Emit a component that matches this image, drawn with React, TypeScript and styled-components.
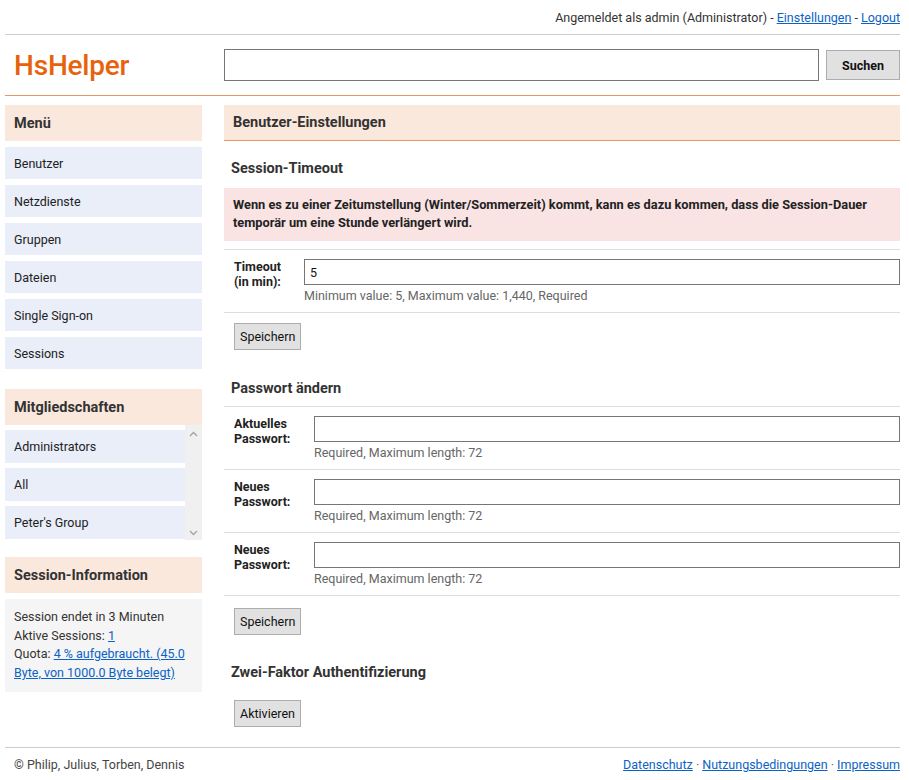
import React from 'react';
import styled, { createGlobalStyle } from 'styled-components';

const GlobalStyle = createGlobalStyle`
  html, body {
    margin: 0;
    padding: 0;
    background: #fff;
  }
  body {
    font-family: Roboto, "Liberation Sans", Arial, sans-serif;
    font-size: 12.5px;
    color: #222;
  }
  a {
    color: #0b63c5;
  }
`;

const Page = styled.div`
  padding: 0 9px 0 5px;
`;

const TopBar = styled.div`
  height: 34px;
  display: flex;
  align-items: center;
  justify-content: flex-end;
  border-bottom: 1px solid #cccccc;
  color: #333;
`;

const Header = styled.header`
  display: grid;
  grid-template-columns: 197px 1fr;
  column-gap: 22px;
  align-items: center;
  height: 60px;
  border-bottom: 1px solid #e59a66;
`;

const Logo = styled.div`
  padding-left: 9px;
  font-size: 28px;
  font-weight: 500;
  color: #e8620c;
  letter-spacing: -0.2px;
`;

const SearchForm = styled.form`
  display: flex;
  align-items: center;
  gap: 7px;
`;

const SearchInput = styled.input`
  flex: 1;
  height: 32px;
  box-sizing: border-box;
  border: 1px solid #767676;
  font: inherit;
`;

const Button = styled.button<{ $bold?: boolean }>`
  height: ${(p) => (p.$bold ? '30px' : '27px')};
  padding: 0 ${(p) => (p.$bold ? '15px' : '5px')};
  background: #e1e1e1;
  border: 1px solid #adadad;
  font-family: Roboto, "Liberation Sans", Arial, sans-serif;
  font-size: 12.5px;
  font-weight: ${(p) => (p.$bold ? 700 : 400)};
  color: #111;
  cursor: pointer;
`;

const Body = styled.div`
  display: grid;
  grid-template-columns: 197px 1fr;
  column-gap: 22px;
  align-items: start;
  padding-top: 9px;
`;

const Sidebar = styled.aside`
  display: flex;
  flex-direction: column;
`;

const Box = styled.section<{ $top?: number }>`
  margin-top: ${(p) => p.$top ?? 0}px;
`;

const BoxTitle = styled.h2<{ $underline?: boolean }>`
  margin: 0;
  height: 36px;
  box-sizing: border-box;
  display: flex;
  align-items: center;
  padding-left: 9px;
  background: #fbe8dd;
  font-size: 14.5px;
  font-weight: 700;
  color: #333;
  border-bottom: ${(p) => (p.$underline ? '1px solid #e59a66' : 'none')};
`;

const MenuList = styled.ul<{ $gap: number }>`
  list-style: none;
  margin: 0;
  padding: 0;
  display: flex;
  flex-direction: column;
  gap: ${(p) => p.$gap}px;
  padding-top: ${(p) => p.$gap}px;
  flex: 1;
`;

const MenuItem = styled.li<{ $height: number }>`
  height: ${(p) => p.$height}px;
  display: flex;
  align-items: center;
  padding-left: 9px;
  background: #e9eef9;
  color: #222;
`;

const ScrollFrame = styled.div`
  display: flex;
  height: 115px;
  overflow: hidden;
`;

const ScrollTrack = styled.div`
  width: 17px;
  background: #f0f0f0;
  display: flex;
  flex-direction: column;
  justify-content: space-between;
  align-items: center;
  padding: 6px 0 4px;
  box-sizing: border-box;
`;

const InfoBox = styled.div`
  margin-top: 6px;
  padding: 9px 9px 9px;
  background: #f5f5f5;
  line-height: 18.7px;
  color: #333;
`;

const Main = styled.main``;

const SectionTitle = styled.h3<{ $top: number; $bottom: number }>`
  margin: ${(p) => p.$top}px 0 ${(p) => p.$bottom}px;
  padding-left: 7px;
  line-height: 20px;
  font-size: 14.5px;
  font-weight: 700;
  color: #333;
`;

const Alert = styled.div`
  height: 53px;
  box-sizing: border-box;
  padding: 8px 9px 0;
  background: #f9e3e3;
  font-size: 12.8px;
  font-weight: 700;
  line-height: 18px;
  color: #222;
  margin-bottom: 8px;
`;

const FormTable = styled.div`
  border-top: 1px solid #dddddd;
`;

const FormRow = styled.div<{ $labelWidth: number }>`
  display: grid;
  grid-template-columns: ${(p) => p.$labelWidth}px 1fr;
  padding: 9px 0 8px 10px;
  border-bottom: 1px solid #dddddd;
`;

const Label = styled.label`
  font-weight: 700;
  line-height: 15px;
  color: #222;
`;

const Field = styled.div`
  display: flex;
  flex-direction: column;
`;

const TextInput = styled.input`
  height: 26px;
  box-sizing: border-box;
  border: 1px solid #767676;
  padding: 0 5px;
  font: inherit;
  color: #111;
`;

const Hint = styled.div`
  margin-top: 3px;
  line-height: 16px;
  color: #666;
`;

const ButtonRow = styled.div<{ $top: number }>`
  display: flex;
  padding: ${(p) => p.$top}px 0 0 10px;
`;

const Footer = styled.footer`
  margin-top: 20px;
  height: 33px;
  border-top: 1px solid #cccccc;
  display: flex;
  align-items: center;
  justify-content: space-between;
  padding-left: 9px;
  color: #444;
`;

const FooterLinks = styled.div`
  color: #666;
`;

const Chevron = ({ up }: { up?: boolean }) => (
  <svg width="9" height="6" viewBox="0 0 9 6">
    <path
      d={up ? 'M1 5 L4.5 1.5 L8 5' : 'M1 1 L4.5 4.5 L8 1'}
      fill="none"
      stroke="#a3a3a3"
      strokeWidth="1.3"
    />
  </svg>
);

const menu = ['Benutzer', 'Netzdienste', 'Gruppen', 'Dateien', 'Single Sign-on', 'Sessions'];
const groups = ['Administrators', 'All', "Peter's Group"];

const passwordRows = [
  ['Aktuelles', 'Passwort:'],
  ['Neues', 'Passwort:'],
  ['Neues', 'Passwort:'],
];

export default function App() {
  return (
    <Page>
      <GlobalStyle />
      <TopBar>
        Angemeldet als admin (Administrator) -&nbsp;<a href="#">Einstellungen</a>&nbsp;-&nbsp;
        <a href="#">Logout</a>
      </TopBar>

      <Header>
        <Logo>HsHelper</Logo>
        <SearchForm onSubmit={(e) => e.preventDefault()}>
          <SearchInput type="text" />
          <Button $bold>Suchen</Button>
        </SearchForm>
      </Header>

      <Body>
        <Sidebar>
          <Box>
            <BoxTitle>Menü</BoxTitle>
            <MenuList $gap={6}>
              {menu.map((m) => (
                <MenuItem key={m} $height={32}>
                  {m}
                </MenuItem>
              ))}
            </MenuList>
          </Box>

          <Box $top={20}>
            <BoxTitle>Mitgliedschaften</BoxTitle>
            <ScrollFrame>
              <MenuList $gap={5}>
                {groups.map((g) => (
                  <MenuItem key={g} $height={33}>
                    {g}
                  </MenuItem>
                ))}
              </MenuList>
              <ScrollTrack>
                <Chevron up />
                <Chevron />
              </ScrollTrack>
            </ScrollFrame>
          </Box>

          <Box $top={17}>
            <BoxTitle>Session-Information</BoxTitle>
            <InfoBox>
              Session endet in 3 Minuten
              <br />
              Aktive Sessions: <a href="#">1</a>
              <br />
              Quota: <a href="#">4 % aufgebraucht. (45.0 Byte, von 1000.0 Byte belegt)</a>
            </InfoBox>
          </Box>
        </Sidebar>

        <Main>
          <BoxTitle $underline>Benutzer-Einstellungen</BoxTitle>

          <SectionTitle $top={18} $bottom={9}>Session-Timeout</SectionTitle>
          <Alert>
            Wenn es zu einer Zeitumstellung (Winter/Sommerzeit) kommt, kann es dazu kommen, dass die
            Session-Dauer temporär um eine Stunde verlängert wird.
          </Alert>
          <FormTable>
            <FormRow $labelWidth={70}>
              <Label>
                Timeout
                <br />
                (in min):
              </Label>
              <Field>
                <TextInput type="text" defaultValue="5" />
                <Hint>Minimum value: 5, Maximum value: 1,440, Required</Hint>
              </Field>
            </FormRow>
          </FormTable>
          <ButtonRow $top={10}>
            <Button>Speichern</Button>
          </ButtonRow>

          <SectionTitle $top={29} $bottom={7}>Passwort ändern</SectionTitle>
          <FormTable>
            {passwordRows.map(([a, b], i) => (
              <FormRow key={i} $labelWidth={80}>
                <Label>
                  {a}
                  <br />
                  {b}
                </Label>
                <Field>
                  <TextInput type="password" />
                  <Hint>Required, Maximum length: 72</Hint>
                </Field>
              </FormRow>
            ))}
          </FormTable>
          <ButtonRow $top={12}>
            <Button>Speichern</Button>
          </ButtonRow>

          <SectionTitle $top={28} $bottom={17}>Zwei-Faktor Authentifizierung</SectionTitle>
          <ButtonRow $top={0}>
            <Button>Aktivieren</Button>
          </ButtonRow>
        </Main>
      </Body>

      <Footer>
        <span>© Philip, Julius, Torben, Dennis</span>
        <FooterLinks>
          <a href="#">Datenschutz</a> · <a href="#">Nutzungsbedingungen</a> ·{' '}
          <a href="#">Impressum</a>
        </FooterLinks>
      </Footer>
    </Page>
  );
}
